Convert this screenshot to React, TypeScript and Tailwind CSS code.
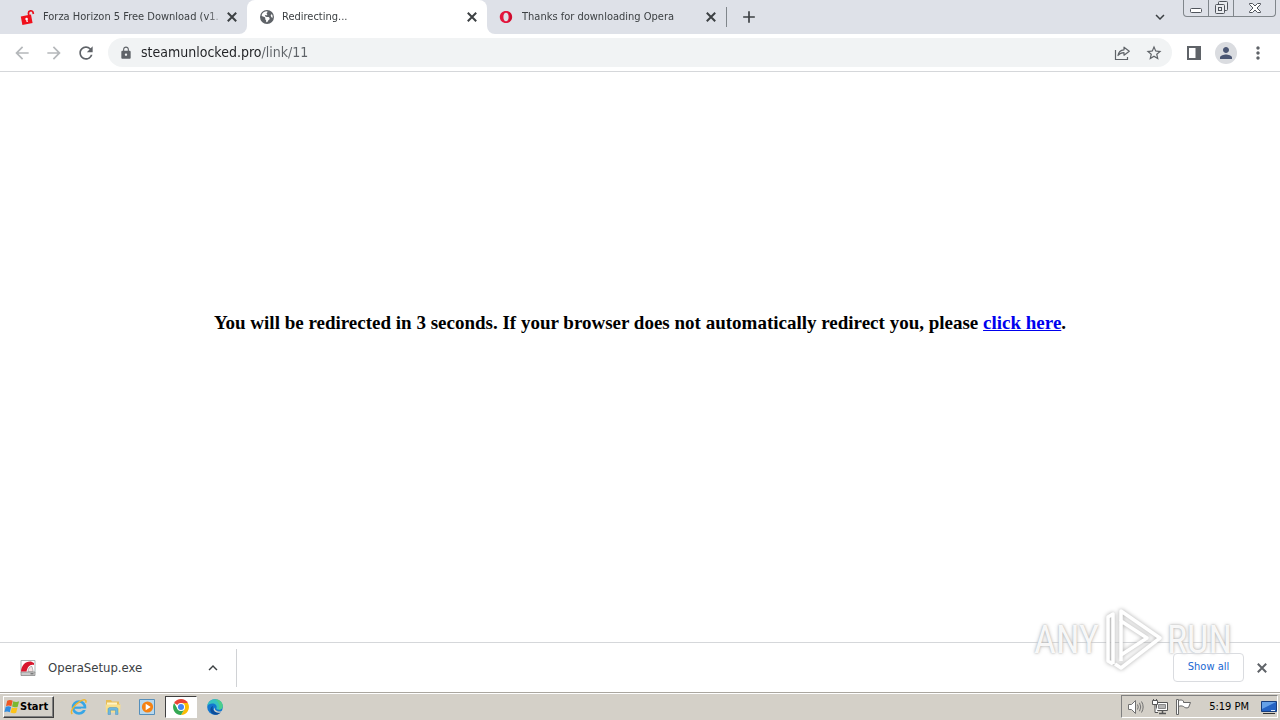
import type { ReactNode } from 'react';
import { MdAdd, MdArrowBack, MdArrowForward, MdExpandLess, MdExpandMore, MdLock, MdMoreVert, MdPerson, MdRefresh, MdStarBorder } from 'react-icons/md';
import { FaEarthAmericas } from 'react-icons/fa6';

function UnlockedIcon() {
  return (
    <svg viewBox="0 0 16 16" className="size-4 shrink-0">
      <path d="M9 7 8.400 4.200a2.400 2.400 0 0 1 4.600-1l.4 1.800" fill="none" stroke="#e8101c" strokeWidth="1.700" />
      <path d="m.8 7.600 10.200-2 1.600 8.400-10.200 1.900z" fill="#f0101c" />
      <circle cx="6.600" cy="10" r="1.300" fill="#fff" />
      <path d="m6.200 10.500 1.100-.2.6 2.600-1.300.2z" fill="#fff" />
    </svg>
  );
}

function OperaIcon() {
  return (
    <svg viewBox="0 0 16 16" className="size-4 shrink-0">
      <path fillRule="evenodd" fill="#e3173e" d="M7 2c3.600 0 6.200 2.600 6.200 6s-2.600 6-6.200 6S.8 11.400.8 8 3.400 2 7 2Zm0 1.700C5.300 3.700 4.400 5.600 4.400 8s.9 4.300 2.600 4.300S9.600 10.400 9.600 8 8.700 3.700 7 3.700Z" />
      <path fill="#a70014" fillOpacity=".4" d="M9 3.200c2.600.4 3.900 2.500 3.900 4.800s-1.300 4.400-3.900 4.800C10.300 11.600 10.800 10 10.800 8S10.300 4.400 9 3.200Z" />
    </svg>
  );
}

function CloseIcon() {
  return (
    <svg viewBox="0 0 14 14" className="size-3.5" stroke="currentColor" strokeWidth="2">
      <path d="m2.800 2.800 8.400 8.400M11.200 2.800l-8.400 8.400" />
    </svg>
  );
}

function ShareIcon() {
  return (
    <svg viewBox="0 0 18 18" className="size-[18px]" fill="none" stroke="#5f6368" strokeWidth="1.200">
      <path d="M2.500 6v9.500h12V13" />
      <path d="M5 11.500C5.500 7.800 8 6 11 5.800V3.200l5.300 4L11 11.200V8.700c-2.600 0-4.500.8-6 2.800Z" strokeLinejoin="round" />
    </svg>
  );
}

function SidePanelIcon() {
  return (
    <svg viewBox="0 0 14 14" className="size-3.5">
      <path fillRule="evenodd" fill="#5f6368" d="M0 0h14v14H0ZM2 2v10h6.500V2Z" />
    </svg>
  );
}

function SetupIcon() {
  return (
    <svg viewBox="0 0 16 16" className="size-4 shrink-0">
      <path d="M1 .5h14v12H1z" fill="#fff" stroke="#a9b5b5" />
      <path d="M1 12h14v3.500H1z" fill="#c9c9c9" stroke="#8a8a8a" strokeWidth=".8" />
      <path d="M1 11.500C1.500 5 5.500 1 11 1.500L14 3v2C9.500 4 7.500 7.500 6.500 11.500Z" fill="#d8162c" />
      <path d="M8 11.500c.3-3 1.500-5 4-5l1.200 5Z" fill="#f5e4e4" stroke="#777" strokeWidth=".5" />
      <path d="M10.500 13.800h3" stroke="#5b5b5b" />
    </svg>
  );
}

function WindowsIcon() {
  return (
    <svg viewBox="0 0 16 16" className="size-4 shrink-0">
      <path d="M3.200 1.700c2-1 3.800-.9 5.500.1L7.400 7.200c-1.700-1-3.500-1.100-5.400-.2Z" fill="#ee5722" />
      <path d="M9.300 2.200c1.900 1 3.800.9 5.800.1l-1.400 5.400c-1.900.8-3.800.8-5.600-.1Z" fill="#7cb82f" />
      <path d="M1.700 7.800c2-.9 3.700-.8 5.400.2L5.800 13.300c-1.700-1-3.400-1.100-5.400-.2Z" fill="#2f8ce0" />
      <path d="M7.900 8.400c1.900.9 3.700.9 5.600.1L12.200 13.800c-2 .8-3.900.7-5.700-.2Z" fill="#fdc318" />
    </svg>
  );
}

function ExplorerIcon() {
  return (
    <svg viewBox="0 0 18 18" className="size-[18px]" fill="none">
      <circle cx="9" cy="9.500" r="6" stroke="#37a6e6" strokeWidth="2.600" />
      <path d="M4 9.700h10.800" stroke="#37a6e6" strokeWidth="2.200" />
      <path d="M11 12h5v-1.500h-5z" fill="#d4d0c8" />
      <path d="M2.300 16C-.5 13.500 4 7 10 3.300c4-2.300 7-2 5.700 1.500" stroke="#efb62e" strokeWidth="1.500" />
    </svg>
  );
}

function FolderIcon() {
  return (
    <svg viewBox="0 0 18 18" className="size-[18px]">
      <path d="M2 2h5l1 1.500h7V6h1v8H2z" fill="#e7bd56" />
      <path d="M3 4.500h10V8H3z" fill="#fff3c4" />
      <path d="M1.500 6.500h15l-.5 8H2z" fill="#f8df8b" />
      <path d="M4 16.500v-5c0-1.200.7-2 2-2h6c1.300 0 2 .8 2 2v5h-2.500v-4.300h-5v4.300Z" fill="#6cb8df" stroke="#4e91b8" strokeWidth=".5" />
    </svg>
  );
}

function MediaPlayerIcon() {
  return (
    <svg viewBox="0 0 18 18" className="size-[18px]">
      <path d="M1.500 1.500h15v15h-15z" fill="#b8d8ed" stroke="#558fbb" />
      <circle cx="9.500" cy="9" r="5.600" fill="#f58212" />
      <path d="m7.700 5.800 5 3.200-5 3.200z" fill="#fff" />
    </svg>
  );
}

function ChromeIcon() {
  return (
    <svg viewBox="0 0 16 16" className="size-4">
      <path d="M8 8 1.100 4A8 8 0 0 1 14.900 4Z" fill="#ea4335" />
      <path d="M8 8V4h6.900A8 8 0 0 1 8 16l3.500-6Z" fill="#fbbc04" />
      <path d="m8 8 3.500 2L8 16A8 8 0 0 1 1.100 4l3.500 6Z" fill="#34a853" />
      <circle cx="8" cy="8" r="4" fill="#fff" />
      <circle cx="8" cy="8" r="3" fill="#4285f4" />
    </svg>
  );
}

function EdgeIcon() {
  return (
    <svg viewBox="0 0 18 18" className="size-[18px]">
      <circle cx="9" cy="9" r="7.800" fill="#1377cf" />
      <path d="M1.300 8C2 3.500 5 1.200 9 1.200c4.500 0 7.800 3.300 7.800 6.800 0 2.300-1.700 3.700-3.800 3.700-1.800 0-3-.6-2.500-1.700C11.500 7.500 9 5.400 6.500 5.400 4 5.400 2 6.500 1.300 8Z" fill="#36c3c0" />
      <path d="M9 1.200c4.500 0 7.800 3.300 7.800 6.800 0 2.300-1.700 3.700-3.800 3.700C14 8 13 4 9 1.200Z" fill="#5bd66b" fillOpacity=".6" />
      <path d="M7 8c-1.500 3.500 1.500 7 6.500 6.200l2-.8C12 18.500 5.500 17.500 4.500 13 4 10.500 5 8.700 7 8Z" fill="#0c4d9b" />
      <path d="M9.300 9c-1.500 2 .5 4.500 4 4.500 1.700 0 2.700-.5 3.200-.8l-1 1.800c-3.500 1-8-.5-7.700-3.500Z" fill="#d4d0c8" />
    </svg>
  );
}

function VolumeIcon() {
  return (
    <svg viewBox="0 0 18 18" className="size-[18px]" fill="none" stroke="#707070">
      <path d="M1.500 6.500h3l4-4v13l-4-4h-3z" fill="#fff" />
      <path d="M10.500 6.500q1.500 2.500 0 5M12.500 4.800q2.500 4.200 0 8.400M14.500 3.500q3.300 5.500 0 11" />
    </svg>
  );
}

function NetworkIcon() {
  return (
    <svg viewBox="0 0 18 18" className="size-[18px]" stroke="#555">
      <path d="M5.500 4.500h11v8h-11z" fill="#fff" />
      <path d="M7.500 6.500h7v4h-7z" fill="#b4b4b4" stroke="#888" />
      <path d="M8 15.500h7M11.500 13v2" strokeWidth="1.500" />
      <path d="M1.500 2.500h5v4h-5zM2.500 1v1.500M5.500 1v1.500M4 6.500v8h3" fill="#fff" />
    </svg>
  );
}

function FlagIcon() {
  return (
    <svg viewBox="0 0 18 18" className="size-[18px]" fill="#fff" stroke="#666">
      <path d="M3.500 2.500c2-1 3.500-.5 5 .5v1.500h7l-2 5c-2 .8-3.500.4-5-1-1.700-.8-3.200-.8-5 0Z" />
      <path d="M1.500 1.500h2v15h-2z" />
    </svg>
  );
}

function MonitorIcon() {
  return (
    <svg viewBox="0 0 16 16" className="size-4">
      <path d="M.5 2.500h15v10H.5z" fill="#2463c4" stroke="#173e7e" />
      <path d="M1 3h14L1 10z" fill="#65a1e8" />
      <path d="M2 14.500h12" stroke="#333" />
      <path d="M10 11.500h4" stroke="#dce9fa" />
    </svg>
  );
}

function Tab({ icon, title, active }: { icon: ReactNode; title: string; active?: boolean }) {
  return (
    <div className={`flex min-w-0 items-center pr-2 pl-3 ${active ? 'w-60 rounded-t-lg bg-white' : 'w-[239px]'}`}>
      {icon}
      <span className="ml-[7px] min-w-0 flex-1 overflow-hidden mask-r-from-90% text-[11px] whitespace-nowrap text-[#3c4043]">{title}</span>
      <button aria-label="Close tab" className="shrink-0 text-[#3c4043]">
        <CloseIcon />
      </button>
    </div>
  );
}

function ToolbarButton({ label, children }: { label: string; children: ReactNode }) {
  return (
    <button aria-label={label} className="flex h-7 w-8 shrink-0 items-center justify-center text-[#5f6368]">
      {children}
    </button>
  );
}

function TabStrip() {
  return (
    <header className="flex h-[34px] bg-white">
      <div className="flex rounded-br-lg bg-[#dee1e8] pl-2">
        <Tab icon={<UnlockedIcon />} title="Forza Horizon 5 Free Download (v1." />
      </div>
      <div className="flex bg-[#dee1e8]">
        <Tab active icon={<FaEarthAmericas className="size-4 shrink-0 p-px text-[#5f6368]" />} title="Redirecting..." />
      </div>
      <div className="flex min-w-0 flex-1 items-center rounded-bl-lg bg-[#dee1e8]">
        <Tab icon={<OperaIcon />} title="Thanks for downloading Opera" />
        <span className="h-5 w-px bg-[#80868b]" />
        <button aria-label="New tab" className="ml-3 text-[#3c4043]">
          <MdAdd className="size-5" />
        </button>
        <button aria-label="Search tabs" className="mr-3.5 ml-auto text-[#3c4043]">
          <MdExpandMore className="size-[18px]" />
        </button>
        {/* Window controls */}
        <div className="mr-1 flex h-[17px] divide-x divide-[#80868b] self-start rounded-b-sm border border-t-0 border-[#80868b] text-[#50555c]">
          <button aria-label="Minimize" className="flex w-[25px] items-center justify-center">
            <svg viewBox="0 0 12 12" className="size-3" fill="#fff" stroke="currentColor">
              <rect x=".5" y="6.500" width="11" height="4" rx="1" />
            </svg>
          </button>
          <button aria-label="Restore" className="flex w-[25px] items-center justify-center">
            <svg viewBox="0 0 14 14" className="size-3.5" fill="#e9ebef" stroke="currentColor">
              <rect x="4.500" y=".5" width="9" height="9" rx="1" />
              <rect x="1.500" y="3.500" width="9" height="9" rx="1" />
              <rect x="4.500" y="6.500" width="3" height="3" />
            </svg>
          </button>
          <button aria-label="Close" className="flex w-[41px] items-center justify-center">
            <svg viewBox="0 0 12 12" className="size-3" fill="#fff" stroke="currentColor">
              <path d="M.5 1.500h3L6 4l2.500-2.500h3v1L8 6l3.500 3.500v1h-3L6 8l-2.500 2.500h-3v-1L4 6 .5 2.500Z" />
            </svg>
          </button>
        </div>
      </div>
    </header>
  );
}

function Toolbar() {
  return (
    <nav className="flex h-[38px] items-center border-b border-[#d5d7da] bg-white px-1.5">
      <div className="flex text-[#b5b8bb]">
        <button aria-label="Back" className="flex w-8 justify-center">
          <MdArrowBack className="size-5" />
        </button>
        <button aria-label="Forward" className="flex w-8 justify-center">
          <MdArrowForward className="size-5" />
        </button>
      </div>
      <ToolbarButton label="Reload">
        <MdRefresh className="size-5" />
      </ToolbarButton>
      <div className="mx-1.5 flex h-[29px] min-w-0 flex-1 items-center rounded-full bg-[#f1f3f4] pr-0.5 pl-[11px]">
        <MdLock className="mr-2 size-3.5 shrink-0 text-[#5f6368]" />
        <input
          aria-label="Address"
          defaultValue="steamunlocked.pro/link/11"
          className="min-w-0 flex-1 bg-[linear-gradient(90deg,#202124_120px,#5f6368_120px)] bg-clip-text text-[14px] text-transparent outline-none"
        />
        <ToolbarButton label="Share">
          <ShareIcon />
        </ToolbarButton>
        <ToolbarButton label="Bookmark">
          <MdStarBorder className="size-[18px]" />
        </ToolbarButton>
      </div>
      <ToolbarButton label="Side panel">
        <SidePanelIcon />
      </ToolbarButton>
      <ToolbarButton label="Profile">
        <span className="flex size-[22px] items-center justify-center rounded-full bg-[#dadce0]">
          <MdPerson className="size-[18px] text-[#4a5673]" />
        </span>
      </ToolbarButton>
      <ToolbarButton label="Menu">
        <MdMoreVert className="size-5" />
      </ToolbarButton>
    </nav>
  );
}

function Watermark() {
  return (
    <div className="pointer-events-none absolute right-12 bottom-5 flex items-center gap-1 font-['Roboto_Condensed','Liberation_Sans',sans-serif] text-[38px] leading-none text-white/90 [text-shadow:0_0_2px_#aaa,0_0_4px_#ccc]">
      <span>ANY</span>
      <svg viewBox="0 0 60 64" className="h-16 w-[60px] drop-shadow-[0_0_2px_#aaa]" fill="none" stroke="#fff" strokeWidth="3.500" strokeLinejoin="round">
        <path d="M18 13V3l39 27-39 30-6-4" />
        <path d="M18 53V13l26 17-26 17" />
        <path d="M10 56 5 53V9l5-3v50" />
      </svg>
      <span>RUN</span>
    </div>
  );
}

function DownloadShelf() {
  return (
    <section className="relative flex h-[50px] items-center border-t border-[#d5d7da] bg-white pr-[11px]">
      <button className="flex w-[236px] items-center gap-3 pr-3.5 pl-5 text-left text-[13px] text-[#3c4043]">
        <SetupIcon />
        <span className="flex-1">OperaSetup.exe</span>
        <MdExpandLess className="size-[18px]" />
      </button>
      <span className="h-[38px] w-px bg-[#d0d2d5]" />
      <Watermark />
      <button className="relative ml-auto h-[29px] w-[71px] rounded border border-[#dadce0] text-[11px] text-[#1967d2]">Show all</button>
      <button aria-label="Close downloads" className="ml-[11px] text-[#5f6368]">
        <CloseIcon />
      </button>
    </section>
  );
}

function Taskbar() {
  return (
    <footer className="flex h-7 items-center border-t border-[#aaa69f] bg-[#d4d0c8] pr-0.5 pl-[3px] text-black shadow-[inset_0_1px_#fff]">
      <button className="flex h-[22px] w-[51px] items-center border border-t-white border-r-[#404040] border-b-[#404040] border-l-white pt-px text-[11px] font-bold shadow-[inset_-1px_-1px_#808080]">
        <WindowsIcon />
        Start
      </button>
      <div className="ml-2 flex items-center">
        <button aria-label="Internet Explorer" className="flex w-[34px] justify-center">
          <ExplorerIcon />
        </button>
        <button aria-label="File Explorer" className="flex w-[34px] justify-center">
          <FolderIcon />
        </button>
        <button aria-label="Media Player" className="flex w-[34px] justify-center">
          <MediaPlayerIcon />
        </button>
        <button aria-label="Chrome" className="mx-px flex h-[22px] w-8 items-center justify-center border border-t-[#404040] border-r-white border-b-white border-l-[#404040] bg-white">
          <ChromeIcon />
        </button>
        <button aria-label="Edge" className="flex w-[34px] justify-center">
          <EdgeIcon />
        </button>
      </div>
      {/* Tray */}
      <div className="ml-auto flex h-[23px] items-center gap-1.5 border border-t-[#808080] border-r-white border-b-white border-l-[#808080] pl-[5px]">
        <VolumeIcon />
        <NetworkIcon />
        <FlagIcon />
        <time className="mr-1.5 ml-2.5 pt-0.5 text-[11px] whitespace-nowrap">5:19 PM</time>
        <MonitorIcon />
      </div>
    </footer>
  );
}

export default function App() {
  return (
    <div className="flex min-h-screen flex-col bg-white font-['DejaVu_Sans_Condensed','Noto_Sans',sans-serif]">
      <TabStrip />
      <Toolbar />
      <main className="flex flex-1 items-center justify-center pb-[68px]">
        <h3 className="text-center font-['Liberation_Serif',serif] text-[19px] leading-6 font-bold text-black">
          You will be redirected in 3 seconds. If your browser does not automatically redirect you, please{' '}
          <a href="#" className="text-[#0000ee] underline">
            click here
          </a>
          .
        </h3>
      </main>
      <DownloadShelf />
      <Taskbar />
    </div>
  );
}
